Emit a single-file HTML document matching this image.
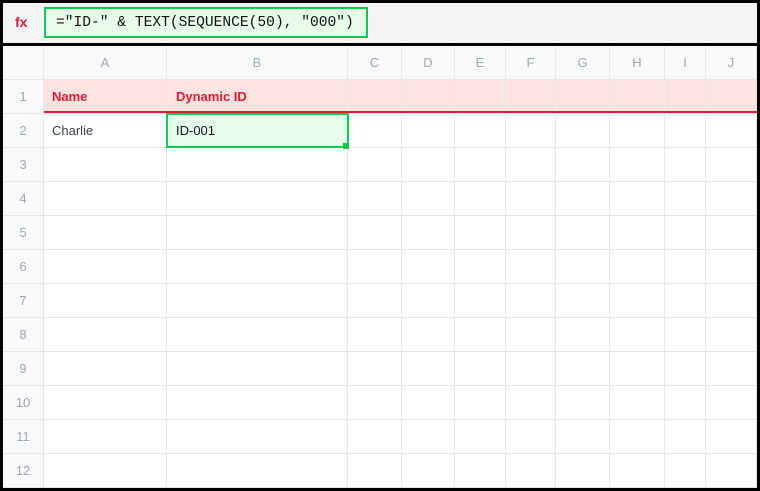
<!DOCTYPE html>
<html><head><style>
*{margin:0;padding:0;box-sizing:border-box}
body{width:760px;height:491px;background:#000;position:relative;overflow:hidden;font-family:"Liberation Sans",Arial,sans-serif}
.a{position:absolute}
.ch{position:absolute;top:46px;height:34px;line-height:33px;text-align:center;color:#a0a6b0;font-size:13px;background:#f8f9fb;border-right:1px solid #e5e7eb;border-bottom:1px solid #e5e7eb}
.rh{position:absolute;left:3px;width:41px;height:34px;line-height:33px;text-align:center;color:#a0a6b0;font-size:13px;background:#f8f9fb;border-right:1px solid #e5e7eb;border-bottom:1px solid #e5e7eb}
</style></head><body>
<div class="a" style="left:3px;top:3px;width:754px;height:40px;background:#f3f4f6"></div>
<div class="a" style="left:15px;top:14px;color:#dc1f32;font-weight:bold;font-size:14px">fx</div>
<div class="a" style="left:44px;top:7px;width:324px;height:31px;background:#e8fbe9;border:2px solid #11c94f;font-family:'Liberation Mono',monospace;font-size:14.6px;line-height:29px;padding-left:10px;color:#111">="ID-" &amp; TEXT(SEQUENCE(50), "000")</div>
<div class="a" style="left:3px;top:46px;width:754px;height:441px;background:#fff"></div>
<div id="g"></div>
<script>
var cols=[[44,167,'A'],[167,348,'B'],[348,402,'C'],[402,455,'D'],[455,506,'E'],[506,556,'F'],[556,610,'G'],[610,665,'H'],[665,706,'I'],[706,757,'J']];
var h='<div class="rh" style="top:46px"></div>';
cols.forEach(function(c){h+='<div class="ch" style="left:'+c[0]+'px;width:'+(c[1]-c[0])+'px">'+c[2]+'</div>';});
for(var r=1;r<=12;r++){var t=80+(r-1)*34;
h+='<div class="rh" style="top:'+t+'px">'+r+'</div>';
cols.forEach(function(c){h+='<div class="a" style="left:'+c[0]+'px;top:'+t+'px;width:'+(c[1]-c[0])+'px;height:34px;border-right:1px solid #e5e7eb;border-bottom:1px solid #e5e7eb;'+(r==1?'background:#fee1e1;':'')+'"></div>';});}
g.innerHTML=h;
</script>
<div class="a" style="left:44px;top:111px;width:713px;height:2px;background:#dc1f32"></div>
<div class="a" style="left:52px;top:89px;color:#dc1f32;font-weight:bold;font-size:13px">Name</div>
<div class="a" style="left:176px;top:89px;color:#dc1f32;font-weight:bold;font-size:13px">Dynamic ID</div>
<div class="a" style="left:52px;top:123px;color:#374151;font-size:13px">Charlie</div>
<div class="a" style="left:166px;top:113px;width:183px;height:35px;background:#e6fcea;border:2px solid #11c94f"></div>
<div class="a" style="left:176px;top:123px;color:#111;font-size:13px">ID-001</div>
<div class="a" style="left:343px;top:143px;width:6px;height:6px;background:#11c94f"></div>
</body></html>
